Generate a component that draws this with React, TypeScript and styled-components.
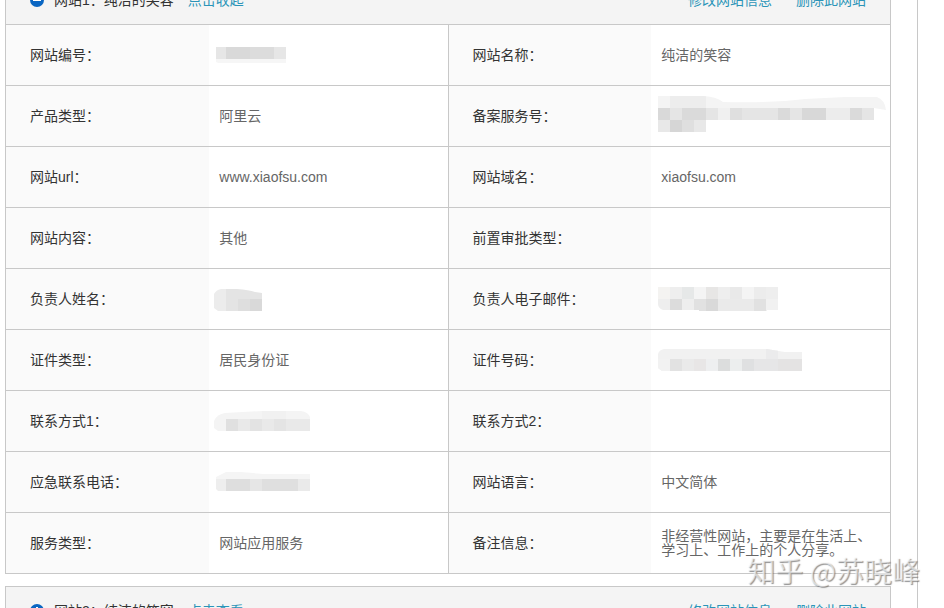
import React from "react";
import styled, { createGlobalStyle } from "styled-components";

const GlobalStyle = createGlobalStyle`
  * { box-sizing: border-box; }
  body {
    margin: 0;
    background: #fff;
    color: #333;
    font: 14px/14px "Liberation Sans", "Noto Sans CJK SC", sans-serif;
  }
`;

const Viewport = styled.div`
  position: relative;
  height: 100vh;
  overflow: hidden;
`;

const Content = styled.main`
  display: flex;
  flex-direction: column;
  gap: 12px;
  margin: -26px 26px 0 0;
  padding: 0 26px 0 5px;
  border-right: 1px solid #c8c8c8;
`;

const Panel = styled.section`
  border: 1px solid #c8c8c8;
`;

const PanelHeader = styled.header`
  display: flex;
  align-items: center;
  height: 49px;
  padding: 0 24px;
  background: #f4f4f4;
`;

const Toggle = styled.button`
  display: flex;
  margin: 0 10px 0 0;
  padding: 0;
  border: 0;
  background: none;
`;

const Title = styled.h2`
  margin: 0 14px 0 0;
  font-size: 14px;
  font-weight: 400;
`;

const Link = styled.a`
  color: #2b94b8;
  text-decoration: none;
`;

const Actions = styled.nav`
  display: flex;
  gap: 24px;
  margin-left: auto;
`;

const Table = styled.table`
  width: 100%;
  table-layout: fixed;
  border-collapse: collapse;
`;

const Row = styled.tr`
  height: 61px;
  border-top: 1px solid #c8c8c8;

  &:last-child {
    height: 60px;
  }
`;

const Label = styled.th`
  width: 23%;
  padding: 0 0 0 24px;
  background: #fafafa;
  font-weight: 400;
  text-align: left;
  white-space: nowrap;
`;

const Value = styled.td<{ $divided?: boolean }>`
  padding: 0 10px;
  border-right: ${(p) => (p.$divided ? "1px solid #c8c8c8" : "0")};
  color: #666;
`;

const Masked = styled.svg<{ $lift?: number }>`
  display: block;
  margin: 0 0 ${(p) => p.$lift ?? 0}px -6px;
`;

const Watermark = styled.div`
  position: absolute;
  right: 24px;
  bottom: 24px;
  color: rgba(255, 255, 255, 0.6);
  font-family: "Noto Sans CJK SC", sans-serif;
  font-size: 28px;
  line-height: 28px;
  white-space: nowrap;
  text-shadow: 1px 1px 1px rgba(110, 110, 110, 0.75);
`;

type Mosaic = {
  width: number;
  height: number;
  lift?: number;
  outline: string;
  cells: [number, number, number, number, string][];
};

const mosaics: Record<string, Mosaic> = {
  siteId: {
    width: 76, height: 20, lift: 2,
    outline: "M3 3H73V21H10L3 18Z",
    cells: [[3, 3, 70, 12, "#e6e6e6"], [13, 3, 24, 12, "#d9d9d9"], [37, 3, 24, 12, "#dcdcdc"], [3, 15, 70, 4, "#f6f6f6"]],
  },
  service: {
    width: 232, height: 38, lift: 6,
    outline: "M3 2H49Q62 3 68 8Q118 9 150 5L190 3H222Q230 6 231 16L219 14V26H51V38H3Z",
    cells: [
      [3, 2, 229, 14, "#f4f4f4"], [15, 2, 36, 12, "#ededed"], [3, 14, 216, 12, "#e5e5e5"], [3, 14, 12, 12, "#d9d9d9"],
      [27, 14, 24, 12, "#dadada"], [63, 14, 12, 12, "#f0f0f0"], [75, 14, 12, 12, "#dfdfdf"], [123, 14, 12, 12, "#dadada"],
      [147, 14, 24, 12, "#d8d8d8"], [171, 14, 24, 12, "#ececec"], [195, 14, 12, 12, "#dadada"],
      [3, 26, 48, 12, "#e8e8e8"], [15, 26, 12, 12, "#d6d6d6"], [27, 26, 12, 12, "#dfdfdf"],
    ],
  },
  owner: {
    width: 50, height: 24,
    outline: "M1 7Q3 3 8 2H24Q36 3 42 5L49 6V24H5L1 21Z",
    cells: [
      [1, 2, 12, 22, "#ececec"], [13, 2, 12, 22, "#e4e4e4"], [25, 2, 24, 10, "#e4e4e4"],
      [25, 12, 12, 12, "#dedede"], [37, 12, 12, 12, "#d9d9d9"],
    ],
  },
  email: {
    width: 124, height: 24,
    outline: "M2 0H123V23H112V24H44V23H8Q3 21 3 17Z",
    cells: [
      [3, 0, 120, 24, "#eeeeee"], [3, 0, 12, 12, "#f4f3f1"], [27, 0, 12, 12, "#e6e8e8"], [39, 0, 12, 12, "#f4f4f4"],
      [51, 0, 12, 12, "#e7e6e5"], [75, 0, 12, 12, "#e9e9e9"], [87, 0, 12, 12, "#f4f4f4"], [99, 0, 12, 12, "#ececec"],
      [15, 12, 12, 12, "#dcdcdc"], [39, 12, 12, 12, "#e1e1e1"], [51, 12, 12, 12, "#d9d9d9"],
      [63, 12, 36, 12, "#eaeaea"], [99, 12, 12, 12, "#e1e1e1"], [111, 12, 12, 12, "#f1f1f1"],
    ],
  },
  idNumber: {
    width: 148, height: 24,
    outline: "M3 6Q4 2 9 1H112Q124 3 130 4H147V23H7L3 20Z",
    cells: [
      [3, 1, 144, 22, "#f1f1f1"], [111, 1, 12, 10, "#ebebec"], [3, 11, 12, 12, "#f2f2f2"],
      [15, 11, 12, 12, "#e2e2e2"], [27, 11, 12, 12, "#eaeaea"], [39, 11, 12, 12, "#e8e6e6"],
      [51, 11, 12, 12, "#eeeff0"], [63, 11, 12, 12, "#dcdddd"], [75, 11, 12, 12, "#eceeee"],
      [87, 11, 12, 12, "#dfe0e1"], [99, 11, 24, 12, "#e6e6e7"], [123, 11, 24, 12, "#e4e3e3"],
    ],
  },
  phone: {
    width: 98, height: 22,
    outline: "M1 11Q4 4 12 3L50 1H88Q95 2 97 7V21H5L1 18Z",
    cells: [
      [1, 1, 96, 20, "#f4f4f4"], [49, 1, 24, 9, "#f1f1f1"], [13, 9, 84, 12, "#e9e9e9"],
      [13, 9, 12, 12, "#e0e0e0"], [37, 9, 12, 12, "#e3e3e3"], [61, 9, 12, 12, "#e4e4e4"],
    ],
  },
  emergency: {
    width: 98, height: 22,
    outline: "M3 6L13 1H28L50 3H97V20H5L3 18Z",
    cells: [
      [3, 0, 94, 9, "#f5f5f5"], [3, 8, 10, 12, "#eeeeee"], [13, 8, 24, 12, "#dedede"],
      [37, 8, 12, 12, "#e6e6e6"], [49, 8, 36, 12, "#dfdfdf"], [85, 8, 12, 12, "#eaeaea"],
    ],
  },
};

const Redacted = ({ name }: { name: string }) => {
  const m = mosaics[name];
  return (
    <Masked $lift={m.lift} width={m.width} height={m.height} aria-hidden="true">
      <clipPath id={name}><path d={m.outline} /></clipPath>
      <g clipPath={`url(#${name})`}>
        {m.cells.map(([x, y, w, h, fill], i) => <rect key={i} x={x} y={y} width={w} height={h} fill={fill} />)}
      </g>
    </Masked>
  );
};

type Cell = { label: string; text?: string; mask?: string };
const rows: [Cell, Cell][] = [
  [{ label: "网站编号：", mask: "siteId" }, { label: "网站名称：", text: "纯洁的笑容" }],
  [{ label: "产品类型：", text: "阿里云" }, { label: "备案服务号：", mask: "service" }],
  [{ label: "网站url：", text: "www.xiaofsu.com" }, { label: "网站域名：", text: "xiaofsu.com" }],
  [{ label: "网站内容：", text: "其他" }, { label: "前置审批类型：" }],
  [{ label: "负责人姓名：", mask: "owner" }, { label: "负责人电子邮件：", mask: "email" }],
  [{ label: "证件类型：", text: "居民身份证" }, { label: "证件号码：", mask: "idNumber" }],
  [{ label: "联系方式1：", mask: "phone" }, { label: "联系方式2：" }],
  [{ label: "应急联系电话：", mask: "emergency" }, { label: "网站语言：", text: "中文简体" }],
  [{ label: "服务类型：", text: "网站应用服务" }, { label: "备注信息：", text: "非经营性网站，主要是在生活上、学习上、工作上的个人分享。" }],
];

const SiteHeader = ({ title, action, open }: { title: string; action: string; open?: boolean }) => (
  <PanelHeader>
    <Toggle aria-label={action}>
      <svg width="14" height="14" viewBox="0 0 14 14">
        <circle cx="7" cy="7" r="7" fill="#0a66c2" />
        <path d={open ? "M3 7H11" : "M3 7H11M7 3V11"} stroke="#fff" strokeWidth="2" />
      </svg>
    </Toggle>
    <Title>{title}</Title>
    <Link href="#">{action}</Link>
    <Actions>
      <Link href="#">修改网站信息</Link>
      <Link href="#">删除此网站</Link>
    </Actions>
  </PanelHeader>
);

export default function App() {
  return (
    <Viewport>
      <GlobalStyle />
      <Content>
        <Panel>
          <SiteHeader title="网站1：纯洁的笑容" action="点击收起" open />
          <Table>
            <tbody>
              {rows.map((row) => (
                <Row key={row[0].label}>
                  {row.map((cell, i) => (
                    <React.Fragment key={cell.label}>
                      <Label scope="row">{cell.label}</Label>
                      <Value $divided={i === 0}>{cell.mask ? <Redacted name={cell.mask} /> : cell.text}</Value>
                    </React.Fragment>
                  ))}
                </Row>
              ))}
            </tbody>
          </Table>
        </Panel>
        <Panel>
          <SiteHeader title="网站2：纯洁的笑容" action="点击查看" />
        </Panel>
      </Content>
      <Watermark>知乎 @苏晓峰</Watermark>
    </Viewport>
  );
}
